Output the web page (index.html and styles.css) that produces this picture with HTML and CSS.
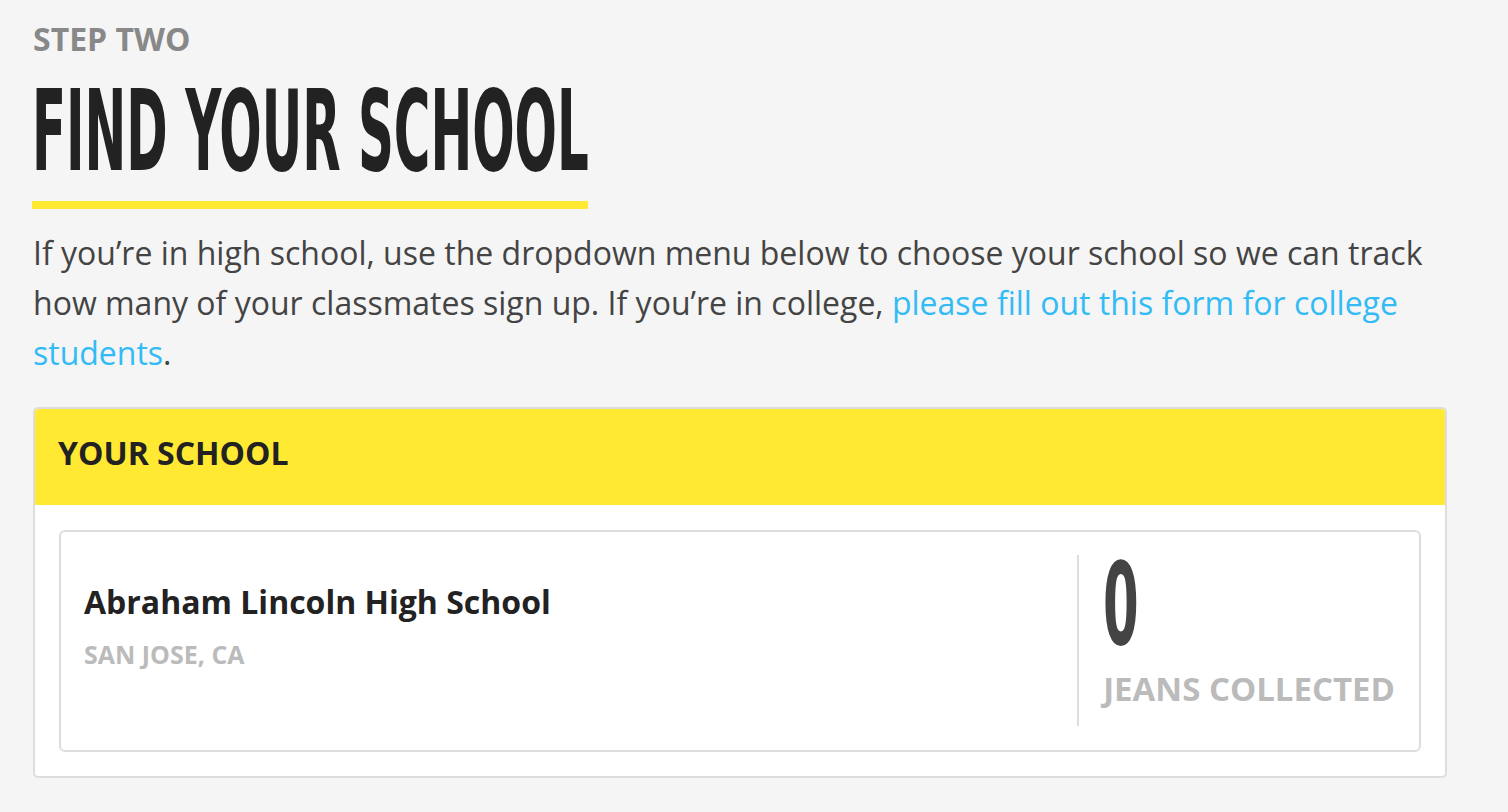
FILE: index.html
```html
<!DOCTYPE html>
<html lang="en">
<head>
<meta charset="utf-8">
<title>Find your school</title>
<link rel="stylesheet" href="styles.css">
</head>
<body>
<main class="page">
  <p class="step">STEP TWO</p>
  <h1 class="title"><span class="title-text">FIND YOUR SCHOOL</span></h1>
  <p class="intro">If you’re in high school, use the dropdown menu below to choose your school so we can track how many of your classmates sign up. If you’re in college, <a href="#" class="link">please fill out this form for college students</a>.</p>
  <section class="panel">
    <header class="panel-head">YOUR SCHOOL</header>
    <div class="panel-body">
      <div class="school">
        <div class="school-info">
          <div class="school-name">Abraham Lincoln High School</div>
          <div class="school-loc">SAN JOSE, CA</div>
        </div>
        <div class="school-stat">
          <div class="stat-num"><span class="stat-digit">0</span></div>
          <div class="stat-label">JEANS COLLECTED</div>
        </div>
      </div>
    </div>
  </section>
</main>
</body>
</html>
```
FILE: styles.css
```css
html, body {
  margin: 0;
  padding: 0;
  background: #f5f5f5;
}
body {
  font-family: "Open Sans", "Liberation Sans", sans-serif;
  color: #444;
}
.page {
  padding: 19px 61px 0 33px;
}
.step {
  margin: 0;
  font-size: 32px;
  font-weight: 700;
  color: #888;
  line-height: 40px;
}
.title {
  margin: 22px 0 0 -1px;
  width: 556px;
  height: 100px;
  padding-bottom: 20px;
  border-bottom: 8px solid #ffe933;
  line-height: 100px;
  white-space: nowrap;
  font-weight: 700;
}
.title-text {
  display: inline-block;
  font-family: "DejaVu Sans", sans-serif;
  font-stretch: condensed;
  font-weight: 700;
  font-size: 112px;
  color: #222;
  transform: scaleX(0.495);
  transform-origin: 0 center;
}
.intro {
  margin: 19px 0 0;
  font-size: 32px;
  line-height: 50px;
  color: #444;
}
.link {
  color: #33bbf5;
  text-decoration: none;
}
.panel {
  margin-top: 29px;
  border: 2px solid #ddd;
  border-radius: 5px;
  background: #fff;
  overflow: hidden;
}
.panel-head {
  background: #ffe933;
  padding: 24px 0 32px 23px;
  font-size: 32px;
  line-height: 40px;
  font-weight: 700;
  color: #222;
}
.panel-body {
  padding: 25px 24px 24px;
}
.school {
  display: flex;
  border: 2px solid #ddd;
  border-radius: 6px;
  padding: 23px 24px 24px 23px;
}
.school-info {
  flex: 1;
  padding-top: 27px;
}
.school-name {
  font-size: 32px;
  line-height: 40px;
  font-weight: 700;
  color: #222;
}
.school-loc {
  margin-top: 17px;
  font-size: 25px;
  line-height: 30px;
  font-weight: 700;
  color: #bbb;
}
.school-stat {
  border-left: 2px solid #ddd;
  padding: 0 0 17px 24px;
}
.stat-num {
  height: 100px;
  line-height: 100px;
  white-space: nowrap;
}
.stat-digit {
  display: inline-block;
  font-family: "DejaVu Sans", sans-serif;
  font-stretch: condensed;
  font-weight: 700;
  font-size: 114px;
  color: #444;
  transform: scaleX(0.5);
  transform-origin: left center;
}
.stat-label {
  margin-top: 14px;
  font-size: 33px;
  line-height: 40px;
  font-weight: 700;
  color: #bbb;
}
```
